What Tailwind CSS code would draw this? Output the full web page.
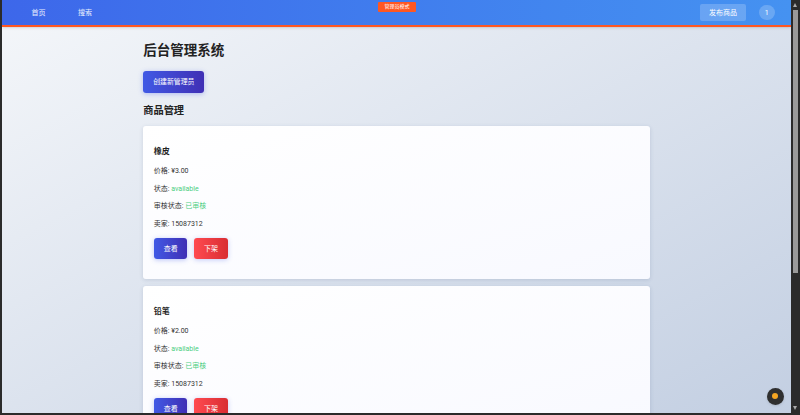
<!DOCTYPE html>
<html lang="zh-CN">
<head>
    <meta charset="UTF-8">
    <meta name="viewport" content="width=device-width, initial-scale=1.0">
    <title>后台管理系统</title>
    <script src="https://cdn.jsdelivr.net/npm/@tailwindcss/browser@4"></script>
</head>
<body class="h-screen overflow-hidden bg-[#2b2b2b] font-['Roboto','Noto_Sans_CJK_SC',sans-serif] text-[#333]">
    <div class="flex h-[413px] pl-[2px]">
        <!-- Page -->
        <div class="relative flex-1 overflow-hidden bg-gradient-to-br from-[#f5f7fa] to-[#c3cfe2]">
            <!-- Header -->
            <header class="relative flex h-[27px] items-center justify-between border-b-2 border-[#ff5722] bg-gradient-to-r from-[#3d67ea] to-[#4592f1] pl-[29.5px] pr-[16.5px] text-white shadow-sm">
                <nav class="flex gap-[32.5px] pt-[2px] text-[7px] text-white/90">
                    <a>首页</a>
                    <a>搜索</a>
                </nav>
                <span class="absolute left-[376px] top-[2px] flex h-[9.5px] w-[38px] items-center justify-center rounded-[1px] bg-[#ff5722] text-[5px] text-white">管理员模式</span>
                <div class="flex items-center gap-[12.5px]">
                    <button class="h-[17.7px] w-[46.7px] rounded-[2px] bg-white/20 pt-[1px] text-[7px] text-white">发布商品</button>
                    <span class="flex size-[15.7px] items-center justify-center rounded-full bg-white/20 pt-[1px] text-[7px]">1</span>
                </div>
            </header>

            <!-- Content -->
            <main class="ml-[141.3px] w-[507px] pt-[15px]">
                <h1 class="text-[13.5px] leading-[16px] font-bold text-[#222]">后台管理系统</h1>
                <button class="mt-[13px] h-[21.5px] w-[61px] rounded-[3px] bg-gradient-to-r from-[#4059e5] to-[#3f2fb5] text-[6.9px] text-white shadow-[0_1px_5px_rgba(64,89,229,0.35)]">创建新管理员</button>
                <h2 class="mt-[11px] text-[10.2px] leading-[14px] font-bold text-[#222]">商品管理</h2>

                <article class="mt-[8.5px] h-[153px] rounded-[3px] bg-gradient-to-br from-white to-[#f8f9ff] px-[10.5px] pt-[19.5px] shadow-[0_1px_4px_rgba(40,60,110,0.15)]">
                    <h3 class="text-[8px] leading-[11px] font-bold text-[#222]">橡皮</h3>
                    <div class="mt-[9.5px] flex flex-col gap-[7.6px] text-[7px] leading-[10px] text-[#333]">
                        <p>价格: ¥3.00</p>
                        <p>状态: <span class="text-[#4cce82]">available</span></p>
                        <p>审核状态: <span class="text-[#4cce82]">已审核</span></p>
                        <p>卖家: 15087312</p>
                    </div>
                    <div class="mt-[9.2px] flex gap-[6.7px]">
                        <button class="h-[21px] w-[33.7px] rounded-[3px] bg-gradient-to-r from-[#4059e5] to-[#3f2fb5] pt-[1px] text-[7px] text-white shadow-[0_1px_5px_rgba(64,89,229,0.35)]">查看</button>
                        <button class="h-[21px] w-[33.7px] rounded-[3px] bg-gradient-to-r from-[#ff4a50] to-[#d92d33] pt-[1px] text-[7px] text-white shadow-[0_1px_5px_rgba(64,89,229,0.3)]">下架</button>
                    </div>
                </article>

                <article class="mt-[7px] h-[153px] rounded-[3px] bg-gradient-to-br from-white to-[#f8f9ff] px-[10.5px] pt-[19.5px] shadow-[0_1px_4px_rgba(40,60,110,0.15)]">
                    <h3 class="text-[8px] leading-[11px] font-bold text-[#222]">铅笔</h3>
                    <div class="mt-[9.5px] flex flex-col gap-[7.6px] text-[7px] leading-[10px] text-[#333]">
                        <p>价格: ¥2.00</p>
                        <p>状态: <span class="text-[#4cce82]">available</span></p>
                        <p>审核状态: <span class="text-[#4cce82]">已审核</span></p>
                        <p>卖家: 15087312</p>
                    </div>
                    <div class="mt-[9.2px] flex gap-[6.7px]">
                        <button class="h-[21px] w-[33.7px] rounded-[3px] bg-gradient-to-r from-[#4059e5] to-[#3f2fb5] pt-[1px] text-[7px] text-white shadow-[0_1px_5px_rgba(64,89,229,0.35)]">查看</button>
                        <button class="h-[21px] w-[33.7px] rounded-[3px] bg-gradient-to-r from-[#ff4a50] to-[#d92d33] pt-[1px] text-[7px] text-white shadow-[0_1px_5px_rgba(64,89,229,0.3)]">下架</button>
                    </div>
                </article>
            </main>

            <!-- Floating status button -->
            <div class="absolute right-[7.5px] bottom-[8.5px] flex size-[17px] items-center justify-center rounded-full bg-[#2f2f2f] shadow">
                <span class="size-[5.5px] rounded-full bg-[#f5a623]"></span>
            </div>
        </div>

        <!-- Scrollbar -->
        <div class="flex w-[9px] flex-col items-start bg-[#2b2b2b] pt-[3px] pb-[3px] pl-[2px]">
            <span class="size-0 border-x-[2.5px] border-b-[4px] border-x-transparent border-b-[#aaa]"></span>
            <span class="mt-[3px] h-[263px] w-[4.5px] bg-[#9a9a9a]"></span>
            <span class="mt-auto size-0 border-x-[2.5px] border-t-[4px] border-x-transparent border-t-[#aaa]"></span>
        </div>
    </div>
</body>
</html>
